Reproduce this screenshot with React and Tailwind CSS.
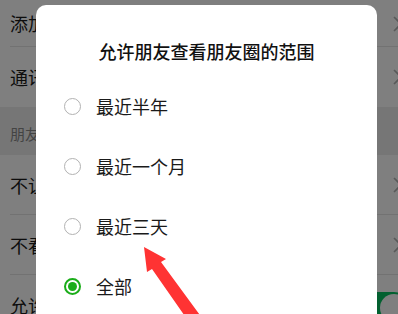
import React from 'react';

const FONT = { fontFamily: '"Noto Sans CJK SC", "Noto Sans", sans-serif' };

function Chevron() {
  return (
    <svg width="9" height="16" viewBox="0 0 9 16" className="shrink-0">
      <path d="M1 1 L8 8 L1 15" fill="none" stroke="#b2b2b2" strokeWidth="1.6" />
    </svg>
  );
}

function Row({ label, h = 'h-[60px]', last, children }) {
  return (
    <div className={`${h} flex items-center pl-[10px] pr-[14px] bg-white relative`}>
      <span className="text-[18px] text-[#1a1a1a] whitespace-nowrap flex-1">{label}</span>
      {children}
      {!last && <div className="absolute left-[10px] right-0 bottom-0 h-px bg-[#e5e5e5]" />}
    </div>
  );
}

function Radio({ checked }) {
  if (checked) {
    return (
      <span className="w-[17px] h-[17px] rounded-full border-2 border-[#1aad19] flex items-center justify-center shrink-0">
        <span className="w-[9px] h-[9px] rounded-full bg-[#1aad19]" />
      </span>
    );
  }
  return <span className="w-[17px] h-[17px] rounded-full border-[1.5px] border-[#b2b2b2] shrink-0" />;
}

const options = [
  { label: '最近半年' },
  { label: '最近一个月' },
  { label: '最近三天' },
  { label: '全部', checked: true },
];

export default function App() {
  return (
    <div className="w-[398px] h-[314px] overflow-hidden relative bg-white" style={FONT}>
      {/* settings page behind the dialog */}
      <div className="w-[424px]">
        <Row label="添加我的方式" h="h-[47px]">
          <span className="mr-[8px]"><Chevron /></span>
        </Row>
        <Row label="通讯录黑名单" last>
          <span className="mr-[8px]"><Chevron /></span>
        </Row>
        <div className="h-[48px] bg-[#ededed] flex items-end pl-[10px] pb-[10px]">
          <span className="text-[15px] text-[#888]">朋友圈</span>
        </div>
        <Row label="不让他（她）看">
          <span className="mr-[8px]"><Chevron /></span>
        </Row>
        <Row label="不看他（她）">
          <span className="mr-[8px]"><Chevron /></span>
        </Row>
        <Row label="允许陌生人查看十条朋友圈" last>
          <span className="w-[52px] h-[32px] rounded-full bg-[#07c160] flex items-center justify-end pr-[2px] mt-[6px]">
            <span className="w-[28px] h-[28px] rounded-full bg-white" />
          </span>
        </Row>
      </div>

      {/* mask */}
      <div className="absolute inset-0 bg-black/50" />

      {/* dialog */}
      <div className="absolute left-[36px] top-[5px] w-[341px] h-[340px] rounded-[10px] bg-white">
        <div className="pt-[34px] text-center text-[18px] font-medium text-[#111] leading-[24px]">
          允许朋友查看朋友圈的范围
        </div>
        <div className="pt-[13px]">
          {options.map(o => (
            <div key={o.label} className="h-[60px] flex items-center pl-[28px] gap-[15px]">
              <Radio checked={o.checked} />
              <span className="text-[18px] text-[#1a1a1a]">{o.label}</span>
            </div>
          ))}
        </div>
      </div>

      {/* red annotation arrow */}
      <svg className="absolute inset-0" width="398" height="314" viewBox="0 0 398 314">
        <polygon
          points="144,247 166,259 161,262 205,322 189,322 152,269 147,272"
          fill="#ff3333"
        />
      </svg>
    </div>
  );
}
